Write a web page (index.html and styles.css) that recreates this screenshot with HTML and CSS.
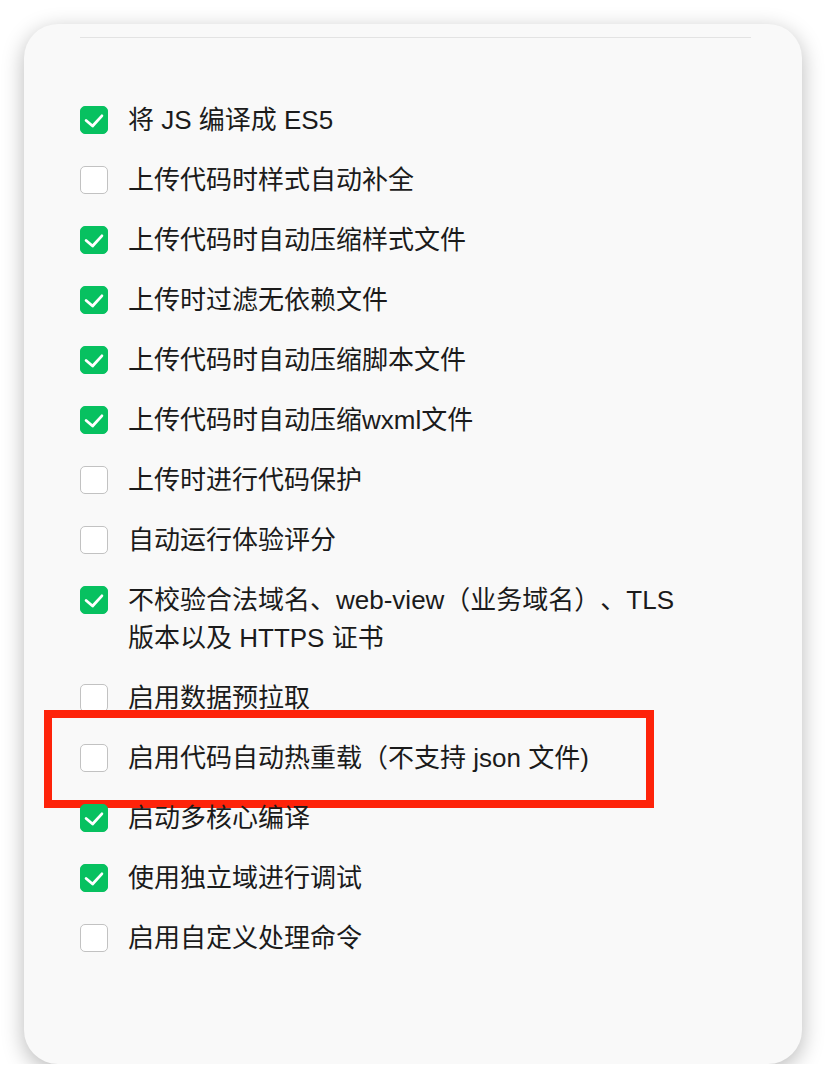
FILE: index.html
```html
<!DOCTYPE html>
<html lang="zh-CN">
<head>
<meta charset="utf-8">
<title>设置</title>
<link rel="stylesheet" href="styles.css">
</head>
<body>
<div class="card">
  <div class="divider"></div>
  <ul class="options">
    <li class="option"><span class="box checked"><svg viewBox="0 0 28 28"><path d="M5.5 14.5 L12.5 20.5 L22.5 9.5"/></svg></span><span class="label">将 JS 编译成 ES5</span></li>
    <li class="option"><span class="box"></span><span class="label">上传代码时样式自动补全</span></li>
    <li class="option"><span class="box checked"><svg viewBox="0 0 28 28"><path d="M5.5 14.5 L12.5 20.5 L22.5 9.5"/></svg></span><span class="label">上传代码时自动压缩样式文件</span></li>
    <li class="option"><span class="box checked"><svg viewBox="0 0 28 28"><path d="M5.5 14.5 L12.5 20.5 L22.5 9.5"/></svg></span><span class="label">上传时过滤无依赖文件</span></li>
    <li class="option"><span class="box checked"><svg viewBox="0 0 28 28"><path d="M5.5 14.5 L12.5 20.5 L22.5 9.5"/></svg></span><span class="label">上传代码时自动压缩脚本文件</span></li>
    <li class="option"><span class="box checked"><svg viewBox="0 0 28 28"><path d="M5.5 14.5 L12.5 20.5 L22.5 9.5"/></svg></span><span class="label">上传代码时自动压缩wxml文件</span></li>
    <li class="option"><span class="box"></span><span class="label">上传时进行代码保护</span></li>
    <li class="option"><span class="box"></span><span class="label">自动运行体验评分</span></li>
    <li class="option"><span class="box checked"><svg viewBox="0 0 28 28"><path d="M5.5 14.5 L12.5 20.5 L22.5 9.5"/></svg></span><span class="label">不校验合法域名、web-view（业务域名）、TLS<br>版本以及 HTTPS 证书</span></li>
    <li class="option"><span class="box"></span><span class="label">启用数据预拉取</span></li>
    <li class="option"><span class="box"></span><span class="label">启用代码自动热重载（不支持 json 文件)</span><span class="highlight"></span></li>
    <li class="option"><span class="box checked"><svg viewBox="0 0 28 28"><path d="M5.5 14.5 L12.5 20.5 L22.5 9.5"/></svg></span><span class="label">启动多核心编译</span></li>
    <li class="option"><span class="box checked"><svg viewBox="0 0 28 28"><path d="M5.5 14.5 L12.5 20.5 L22.5 9.5"/></svg></span><span class="label">使用独立域进行调试</span></li>
    <li class="option"><span class="box"></span><span class="label">启用自定义处理命令</span></li>
  </ul>
</div>
</body>
</html>
```
FILE: styles.css
```css
html, body {
  margin: 0;
  padding: 0;
  background: #ffffff;
}

body {
  padding: 24px 24px 0 24px;
  font-family: "Liberation Sans", "Noto Sans CJK SC", sans-serif;
}

.card {
  box-sizing: border-box;
  width: 778px;
  height: 1040px;
  background: #f9f9f9;
  border-radius: 34px;
  box-shadow: 0 6px 22px rgba(0, 0, 0, 0.28);
  padding: 13px 51px 0 56px;
}

.divider {
  height: 1px;
  background: #e3e3e3;
}

.options {
  list-style: none;
  margin: 63px 0 0 0;
  padding: 0;
  display: flex;
  flex-direction: column;
  gap: 22px;
}

.option {
  position: relative;
  display: flex;
  align-items: flex-start;
  gap: 20px;
}

.box {
  box-sizing: border-box;
  flex: none;
  width: 28px;
  height: 28px;
  margin-top: 5px;
  border-radius: 5px;
  background: #ffffff;
  border: 1px solid #c2c2c2;
  display: flex;
}

.box.checked {
  background: #07c160;
  border-color: #07c160;
}

.box svg {
  width: 26px;
  height: 26px;
  fill: none;
  stroke: #ffffff;
  stroke-width: 3;
  stroke-linecap: round;
  stroke-linejoin: round;
}

.label {
  font-size: 26px;
  line-height: 38px;
  color: #1b1b1b;
  text-spacing-trim: space-all;
}

.highlight {
  position: absolute;
  left: -36px;
  top: -29px;
  width: 610px;
  height: 98px;
  box-sizing: border-box;
  border: 8px solid #fe230a;
  pointer-events: none;
}
```
